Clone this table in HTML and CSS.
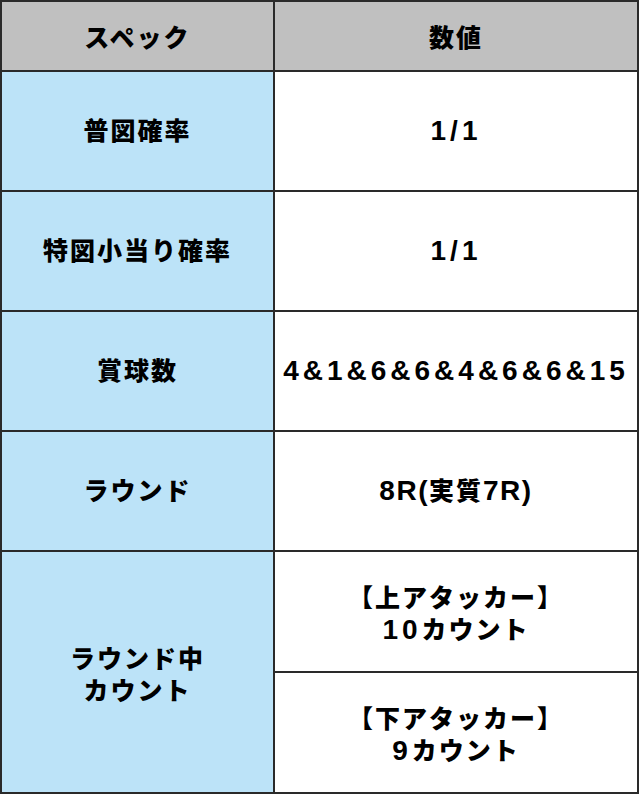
FILE: index.html
```html
<!DOCTYPE html>
<html lang="ja">
<head>
<meta charset="utf-8">
<title>スペック</title>
<link rel="stylesheet" href="styles.css">
</head>
<body>
<table class="spec">
  <colgroup><col class="c-label"><col class="c-value"></colgroup>
  <tr class="r-head">
    <th class="head">スペック</th>
    <th class="head">数値</th>
  </tr>
  <tr class="r-std">
    <th class="label">普図確率</th>
    <td class="value num">1/1</td>
  </tr>
  <tr class="r-std">
    <th class="label">特図小当り確率</th>
    <td class="value num">1/1</td>
  </tr>
  <tr class="r-std">
    <th class="label">賞球数</th>
    <td class="value num">4&amp;1&amp;6&amp;6&amp;4&amp;6&amp;6&amp;15</td>
  </tr>
  <tr class="r-std">
    <th class="label">ラウンド</th>
    <td class="value"><span class="num tight">8R(</span>実質<span class="num tight">7R)</span></td>
  </tr>
  <tr class="r-half">
    <th class="label" rowspan="2">ラウンド中<br>カウント</th>
    <td class="value">【上アタッカー】<br><span class="num">10</span>カウント</td>
  </tr>
  <tr class="r-half">
    <td class="value">【下アタッカー】<br><span class="num">9</span>カウント</td>
  </tr>
</table>
</body>
</html>
```
FILE: styles.css
```css
html, body {
  margin: 0;
  padding: 0;
  background: #ffffff;
}
.spec {
  border-collapse: collapse;
  table-layout: fixed;
  width: 639px;
  font-family: "Liberation Sans", "Noto Sans CJK JP", sans-serif;
  font-weight: 900;
  font-size: 25px;
  line-height: 32px;
  color: #000;
  letter-spacing: 2px;
}
.c-label { width: 273px; }
.spec th, .spec td {
  border: 2px solid #2a2a2a;
  text-align: center;
  vertical-align: middle;
  padding: 0;
  font-weight: 900;
}
.r-head { height: 70px; }
.r-head th { padding-top: 4px; }
.r-std { height: 120px; }
.r-half { height: 121px; }
.r-half th, .r-half td { padding-top: 5px; }
.head { background: #c0c0c0; }
.label { background: #bce3f8; }
.value { background: #ffffff; }
.r-std + .r-std th, .r-std + .r-std td, .r-half td, .r-half th {
  border-top-color: #555;
}
.num {
  font-size: 28px;
  letter-spacing: 4px;
}
.num.tight { letter-spacing: 1.5px; }
```
